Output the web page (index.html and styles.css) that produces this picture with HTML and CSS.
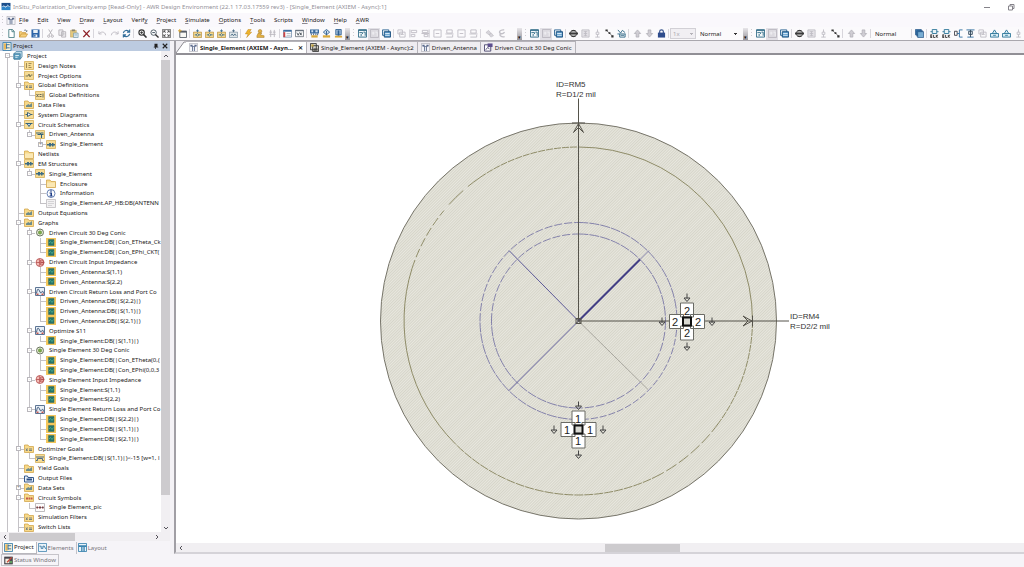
FILE: index.html
```html
<!DOCTYPE html>
<html lang="en">
<head>
<meta charset="utf-8">
<title>AWR Design Environment</title>
<link rel="stylesheet" href="styles.css">
</head>
<body>
<svg class="sprite" aria-hidden="true">
  <symbol id="logo" viewBox="0 0 20 20"><path fill="#1b4f8c" d="M0 2h20v8H0z"/><path fill="#2f86c9" d="M0 10h20v8H0z"/><path stroke="#e6f2fb" stroke-width="2" fill="none" d="M3 10c3-5 5 5 8 0s4-2 6 0"/></symbol>
  <symbol id="layout" viewBox="0 0 20 20"><path fill="#f4f4f8" stroke="#8a8a96" d="M1 1h18v18H1z"/><path fill="#5b6b8c" d="M3 4h5v4H3zM12 4h5v4h-5zM6 7h8v2H6zM7 9h2v9H7zM11 9h2v9h-2z"/></symbol>
  <symbol id="new" viewBox="0 0 20 20"><path fill="#fff" stroke="#4b7f86" stroke-width="2" d="M4 1h8l4 4v14H4z"/><path fill="none" stroke="#4b7f86" stroke-width="2" d="M11 1v5h5"/></symbol>
  <symbol id="open" viewBox="0 0 20 20"><path fill="#f5cf7c" stroke="#c58f30" stroke-width="1.5" d="M1 18V6h5l2 2h7v3M1 18l4-7h14l-4 7z"/><path fill="none" stroke="#456" stroke-width="1.5" d="M11 4c2-3 5-2 6 1m-2-1l2 2 1-3"/></symbol>
  <symbol id="save" viewBox="0 0 20 20"><path fill="#2b63a8" d="M1 1h18v18H1z"/><path fill="#e9f1f8" d="M5 2h10v7H5zM6 12h8v6H6z"/><path fill="#2b63a8" d="M7 13h3v4H7z"/></symbol>
  <symbol id="cut" viewBox="0 0 20 20"><path fill="none" stroke="#b3b0b6" stroke-width="2" d="M6 1l7 12M14 1L7 13"/><circle cx="6" cy="16" r="2.5" fill="none" stroke="#b3b0b6" stroke-width="2"/><circle cx="14" cy="16" r="2.5" fill="none" stroke="#b3b0b6" stroke-width="2"/></symbol>
  <symbol id="copy" viewBox="0 0 20 20"><path fill="#efedf0" stroke="#b5b2b8" stroke-width="2" d="M2 2h9v12H2zM8 6h9v12H8z"/><path stroke="#b5b2b8" d="M10 10h5M10 13h5"/></symbol>
  <symbol id="paste" viewBox="0 0 20 20"><path fill="#e3c77c" stroke="#b2934a" d="M1 3h13v15H1z"/><path fill="#8b8570" d="M4 1h7v4H4z"/><path fill="#e8f1f6" stroke="#6c93a8" stroke-width="1.5" d="M8 9h10v10H8z"/><path stroke="#6c93a8" d="M10 12h6M10 15h6"/></symbol>
  <symbol id="del" viewBox="0 0 20 20"><path stroke="#8c1d24" stroke-width="3" d="M3 3l14 15M17 3L3 18"/></symbol>
  <symbol id="undo" viewBox="0 0 20 20"><path fill="none" stroke="#bdbac2" stroke-width="2" d="M2 5v6h6M2 11c4-6 14-6 15 3"/></symbol>
  <symbol id="redo" viewBox="0 0 20 20"><path fill="none" stroke="#bdbac2" stroke-width="2" d="M18 5v6h-6M18 11C14 5 4 5 3 14"/></symbol>
  <symbol id="refresh" viewBox="0 0 20 20"><path fill="none" stroke="#346f9a" stroke-width="2.5" d="M3 9c1-6 9-8 13-3M17 1v6h-6M17 11c-1 6-9 8-13 3M3 19v-6h6"/></symbol>
  <symbol id="zin" viewBox="0 0 20 20"><circle cx="8" cy="8" r="6" fill="#eee" stroke="#333" stroke-width="2.5"/><path stroke="#333" stroke-width="2" d="M5 8h6M8 5v6"/><path stroke="#333" stroke-width="3.5" d="M12 12l7 7"/></symbol>
  <symbol id="zout" viewBox="0 0 20 20"><circle cx="8" cy="8" r="6" fill="#fff" stroke="#44515c" stroke-width="2"/><path stroke="#345" stroke-width="2" d="M5 8h6"/><path stroke="#333" stroke-width="3" d="M12 12l7 7"/></symbol>
  <symbol id="zfit" viewBox="0 0 20 20"><path fill="none" stroke="#444" stroke-width="1.5" d="M1 1h18v18H1z"/><path stroke="#444" stroke-width="2" fill="none" d="M4 8V4h4M12 4h4v4M16 12v4h-4M8 16H4v-4M4 4l4 4M16 4l-4 4M16 16l-4-4M4 16l4-4"/></symbol>
  <symbol id="newwin" viewBox="0 0 20 20"><path fill="#f8f8f4" stroke="#555c66" stroke-width="2" d="M4 5h15v14H4z"/><path fill="#555c66" d="M4 4h15v4H4z"/><path stroke="#d6a22a" stroke-width="2" d="M4 0v8M0 4h8"/></symbol>
  <symbol id="addbox" viewBox="0 0 20 20"><path fill="#f1d68e" stroke="#b88a2f" stroke-width="1.5" d="M1 7h18v12H1z"/><path stroke="#3b6e92" stroke-width="2" fill="none" d="M4 13h3l3-3 3 3-3 3-3-3M13 13h4M10 1v6M7 4h6"/></symbol>
  <symbol id="addbox2" viewBox="0 0 20 20"><path fill="#dfe6ea" stroke="#748a99" stroke-width="1.5" d="M1 7h18v12H1z"/><path stroke="#4a6b84" stroke-width="2" fill="none" d="M4 15l3-4 3 4 3-4 3 4M10 1v6M7 4h6"/></symbol>
  <symbol id="bolt" viewBox="0 0 20 20"><path fill="#efb52c" stroke="#b97f17" d="M9 1h7l-4 6h5L6 19l3-8H3z"/></symbol>
  <symbol id="person" viewBox="0 0 20 20"><circle cx="9" cy="5" r="4" fill="#e3b042" stroke="#9a7427"/><path fill="#e3b042" stroke="#9a7427" d="M5 9h8l-3 4 8 2v4H2v-4z"/></symbol>
  <symbol id="tune" viewBox="0 0 20 20"><path stroke="#bab7be" stroke-width="2" fill="none" d="M6 2v16M14 2v16M3 7h6M11 7h6M3 12h14"/></symbol>
  <symbol id="win" viewBox="0 0 20 20"><path fill="#fff" stroke="#58779a" stroke-width="1.5" d="M1 3h18v15H1z"/><path fill="#3d6d9f" d="M1 2h18v4H1z"/><path fill="#c44" d="M1 7h4v11H1z"/><path stroke="#b3bac4" stroke-width="2" d="M8 10h9M8 14h9"/></symbol>
  <symbol id="winx" viewBox="0 0 20 20"><path fill="#fff" stroke="#4d565f" stroke-width="1.5" d="M1 3h18v14H1z"/><path fill="#6a7480" d="M1 2h18v3H1z"/><path stroke="#4d565f" stroke-width="2" fill="none" d="M4 8l3 6 3-6M11 8l4 6M15 8l-4 6"/></symbol>
  <symbol id="chip" viewBox="0 0 20 20"><path fill="#3d6c9e" d="M0 1h20v9H0z"/><path fill="#cfe0ee" d="M3 3h4v4H3zM12 3h5v4h-5z"/><path stroke="#3d5b7c" stroke-width="2" fill="none" d="M3 10v4M8 10v4M13 10v4M17 10v4"/><path fill="#d9a83a" d="M3 14h14v5H3z"/></symbol>
  <symbol id="diamond" viewBox="0 0 20 20"><path fill="#cfe0ee" stroke="#2f5f91" stroke-width="2" d="M10 1l7 6-7 6-7-6z"/><path fill="#d9a83a" d="M2 14h16v5H2z"/><path fill="#2f5f91" d="M9 4h2v10H9z"/></symbol>
  <symbol id="meter" viewBox="0 0 20 20"><path fill="#a9c4de" stroke="#2f5f91" stroke-width="2" d="M4 1h12v12H4z"/><path fill="#2f5f91" d="M8 3h4v12H8z"/><path fill="#d9a83a" d="M2 15h16v4H2z"/></symbol>
  <symbol id="view" viewBox="0 0 20 20"><path fill="#f3f8fa" stroke="#2e6a86" stroke-width="2" d="M1 2h18v16H1z"/><path fill="#2e6a86" d="M1 1h18v3H1z"/><path fill="none" stroke="#2e6a86" stroke-width="2" d="M3 8h7v3M12 7h4v8M7 11v5"/></symbol>
  <symbol id="viewg" viewBox="0 0 20 20"><path fill="#dcdae0" stroke="#b9b7bf" stroke-width="2" d="M1 1h18v18H1z"/><path fill="none" stroke="#f2f1f4" stroke-width="2" d="M4 9h6M7 6v7M12 7h4v9"/></symbol>
  <symbol id="stack" viewBox="0 0 20 20"><path fill="#f2f7fb" stroke="#255f90" stroke-width="2" d="M1 2h14v12H1z"/><path fill="#5c9bcb" stroke="#174d7c" stroke-width="2" d="M5 6h14v12H5z"/><path stroke="#e3eff8" stroke-width="2" d="M7 10h10M7 14h10"/></symbol>
  <symbol id="g1" viewBox="0 0 20 20"><path fill="none" stroke="#bfbcc4" stroke-width="2" d="M2 2h10v9H2zM6 7h12v11H6zM9 12h6"/></symbol>
  <symbol id="g2" viewBox="0 0 20 20"><path fill="none" stroke="#bfbcc4" stroke-width="2" d="M2 1v18M5 3h12v5H5zM5 12h8v5H5z"/></symbol>
  <symbol id="g3" viewBox="0 0 20 20"><path fill="none" stroke="#bfbcc4" stroke-width="2" d="M18 1v18M3 3h12v5H3zM7 12h8v5H7zM1 10h17"/></symbol>
  <symbol id="g4" viewBox="0 0 20 20"><path fill="none" stroke="#bfbcc4" stroke-width="2" d="M2 2h16v16H2zM6 10h8"/></symbol>
  <symbol id="g5" viewBox="0 0 20 20"><path fill="none" stroke="#bfbcc4" stroke-width="2" d="M4 2h12v7H4zM1 11h18M3 18h14v-5"/></symbol>
  <symbol id="g6" viewBox="0 0 20 20"><path fill="#d6d4da" stroke="#b4b1b8" d="M2 8l6-5 5 6-4 4zM9 13l5-4 5 6-6 3z"/></symbol>
  <symbol id="g7" viewBox="0 0 20 20"><path fill="none" stroke="#c2c0c7" stroke-width="3" d="M16 2C6 1 3 8 8 10s8-2 9-3M8 10c-4 4 2 9 9 7"/></symbol>
  <symbol id="globe" viewBox="0 0 20 20"><circle cx="10" cy="10" r="7" fill="#ddd" stroke="#3b3b3b" stroke-width="2"/><path fill="#3b3b3b" d="M0 8h20v4H0zM6 2h8v3H6zM6 15h8v3H6z"/></symbol>
  <symbol id="gtab" viewBox="0 0 20 20"><path fill="#e7e5ea" stroke="#c0bdc5" stroke-width="2" d="M2 2h16v16H2zM6 6h8M6 10h8M6 14h8M10 5v11"/></symbol>
  <symbol id="gpin" viewBox="0 0 20 20"><path fill="none" stroke="#c0bdc5" stroke-width="2" d="M10 1v6M7 7h6v5H7zM10 12v6M5 18h10"/></symbol>
  <symbol id="path" viewBox="0 0 20 20"><path stroke="#555" stroke-width="1.5" d="M3 3l14 13"/><path fill="#333" d="M1 1h5v4H1zM8 7h4v4H8zM14 14h5v5h-5z"/></symbol>
  <symbol id="mesh" viewBox="0 0 20 20"><path fill="none" stroke="#2d6686" stroke-width="2" d="M2 2l6 7 4-6 6 5M1 11h18M6 11v7h12v-7M8 14h8"/></symbol>
  <symbol id="up" viewBox="0 0 20 20"><path fill="#cfcdd3" stroke="#aaa8b0" stroke-width="1.5" d="M10 2l7 8h-4v8H7v-8H3z"/></symbol>
  <symbol id="down" viewBox="0 0 20 20"><path fill="#cfcdd3" stroke="#aaa8b0" stroke-width="1.5" d="M10 18l7-8h-4V2H7v8H3z"/></symbol>
  <symbol id="lock" viewBox="0 0 20 20"><path fill="none" stroke="#35508c" stroke-width="2.5" d="M6 9V5c0-4 8-4 8 0v4"/><path fill="#2f4c8c" d="M2 8h16v11H2z"/></symbol>
  <symbol id="cube" viewBox="0 0 20 20"><path fill="#3b7bb2" stroke="#1f4f82" stroke-width="1.5" d="M1 1h13v12H1zM4 4h13v12H4z"/><path fill="#78add3" stroke="#1f4f82" stroke-width="1.5" d="M6 6h13v13H6z"/></symbol>
  <symbol id="elem" viewBox="0 0 20 20"><path fill="#e9f3f8" stroke="#2d7598" stroke-width="2" d="M5 1h10v9H5zM1 6h4M15 6h4"/><path fill="none" stroke="#333" stroke-width="2" d="M1 13h4M1 16h4M1 19h4M2 13v6M8 13v6h4M14 13v6M18 13l-4 3 4 3"/></symbol>
  <symbol id="port" viewBox="0 0 20 20"><path fill="#fff" stroke="#3b3b44" stroke-width="2" d="M1 5h6v9H1z"/><path stroke="#2d6ca0" stroke-width="2" fill="none" d="M7 10h5M19 2h-7v16h7"/></symbol>
  <symbol id="gnd" viewBox="0 0 20 20"><path stroke="#2d6ca0" stroke-width="2" d="M1 2h18M3 18h14"/><path fill="#e4eef4" stroke="#34495c" stroke-width="2" d="M6 5h8v7H6zM10 2v16"/></symbol>
  <symbol id="house" viewBox="0 0 20 20"><path fill="#d9edf5" stroke="#2b7599" stroke-width="2" d="M1 10h18v8H1zM5 10l5-8 5 8M7 14h6"/></symbol>
  <symbol id="panel" viewBox="0 0 20 20"><path fill="#f5efd9" stroke="#3a7fae" stroke-width="2" d="M1 1h18v18H1z"/><path fill="#e8b75a" d="M3 3h5v14H3z"/><path stroke="#2c6b9c" stroke-width="2" fill="none" d="M9 6h7M9 13h7M9 3v12"/></symbol>
  <symbol id="elems" viewBox="0 0 20 20"><path fill="#eaf3f9" stroke="#4f8db5" stroke-width="2" d="M1 1h18v18H1z"/><path fill="none" stroke="#3a78a3" stroke-width="2" d="M3 7h4v5h4V7h3l3 6"/></symbol>
  <symbol id="lay" viewBox="0 0 20 20"><path fill="#eaf3f9" stroke="#3c84b0" stroke-width="2" d="M1 1h18v18H1z"/><path fill="#3c84b0" d="M1 5h18v4H1zM7 9h3v10H7zM12 9h3v10h-3z"/></symbol>
  <symbol id="proj" viewBox="0 0 20 20"><path fill="#bcd9e8" stroke="#35749a" stroke-width="1.5" d="M6 1h13v12l-4 5H1V6z"/><path fill="#5fa0c0" stroke="#35749a" stroke-width="1.5" d="M1 6h14v12H1z"/><path stroke="#e3f2f8" stroke-width="2" d="M4 10h8M4 14h5"/></symbol>
  <symbol id="note" viewBox="0 0 20 18"><path fill="#f6dc95" stroke="#d3ab52" stroke-width="1.5" d="M1 1h18v16H1z"/><path fill="none" stroke="#a08a54" stroke-width="2" d="M5 4v10M9 5h6M9 9h4M9 13h6"/></symbol>
  <symbol id="opt" viewBox="0 0 20 18"><path fill="#f6dc95" stroke="#d3ab52" stroke-width="1.5" d="M1 1h18v16H1z"/><path fill="none" stroke="#7d7a58" stroke-width="2" d="M3 10h5l2-4 2 6 2-4h3"/></symbol>
  <symbol id="var" viewBox="0 0 20 18"><path fill="#f6dc95" stroke="#d3ab52" stroke-width="1.5" d="M1 1h18v16H1z"/><path fill="none" stroke="#6b6c58" stroke-width="2" d="M3 6l4 6M7 6l-4 6M9 7h4M9 11h4M16 5v8"/></symbol>
  <symbol id="fold" viewBox="0 0 20 18"><path fill="#f7d98a" stroke="#d0a347" stroke-width="1.5" d="M1 17V2h7l2 3h9v12z"/><path fill="#fbe8b4" d="M2 7h16v9H2z"/></symbol>
  <symbol id="fx" viewBox="0 0 20 18"><path fill="#f7d98a" stroke="#d0a347" stroke-width="1.5" d="M1 17V2h7l2 3h9v12z"/><path fill="none" stroke="#77807e" stroke-width="2" d="M4 9l3 5M7 9l-3 5M10 10h6M10 13h6"/></symbol>
  <symbol id="data" viewBox="0 0 20 18"><path fill="#f7d98a" stroke="#d0a347" stroke-width="1.5" d="M1 17V2h7l2 3h9v12z"/><path fill="#6e8c8c" d="M4 14V11l5-3 2 2 5-4v8z"/></symbol>
  <symbol id="sys" viewBox="0 0 20 18"><path fill="#f6dc95" stroke="#d3ab52" stroke-width="1.5" d="M1 1h18v16H1z"/><path fill="#fff" stroke="#3f6579" stroke-width="2" d="M7 5l7 4-7 4zM3 9h4M14 9h3"/></symbol>
  <symbol id="sch" viewBox="0 0 20 18"><path fill="#f6dc95" stroke="#d3ab52" stroke-width="1.5" d="M1 1h18v16H1z"/><path fill="#dfeef5" stroke="#33627d" stroke-width="2" d="M3 7h14M6 7l4 6 4-6"/></symbol>
  <symbol id="ant" viewBox="0 0 20 18"><path fill="#f6dc95" stroke="#d3ab52" stroke-width="1.5" d="M1 1h18v16H1z"/><path fill="none" stroke="#33627d" stroke-width="2" d="M2 6h9v3H5M11 9h6M12 6h5M13 9v7"/></symbol>
  <symbol id="em" viewBox="0 0 20 18"><path fill="#f6dc95" stroke="#d3ab52" stroke-width="1.5" d="M1 1h18v16H1z"/><path fill="#3d6c84" d="M2 8h16v3H2zM6 6h4v7H6zM12 6h3v7h-3z"/></symbol>
  <symbol id="info" viewBox="0 0 20 18"><circle cx="10" cy="9" r="8" fill="#fff" stroke="#33569a" stroke-width="1.5"/><path fill="#1d3c87" d="M8 3h4v2H8zM7 7h5v6h1v2H7v-2h2V9H7z"/></symbol>
  <symbol id="page" viewBox="0 0 20 18"><path fill="#f2f1f2" stroke="#bab8bb" stroke-width="1.5" d="M1 1h18v16H1z"/><path stroke="#cac8cb" stroke-width="1.5" d="M4 5h12M4 9h12M4 13h8"/></symbol>
  <symbol id="con" viewBox="0 0 20 18"><circle cx="10" cy="9" r="7" fill="#eef2df" stroke="#6a7560" stroke-width="2"/><circle cx="10" cy="9" r="3.500" fill="#7eb04a" stroke="#5c7d3f"/></symbol>
  <symbol id="smith" viewBox="0 0 20 18"><circle cx="10" cy="9" r="8" fill="#f4bdb7" stroke="#b24b4b" stroke-width="1.5"/><circle cx="13" cy="9" r="4.5" fill="none" stroke="#b24b4b" stroke-width="1.5"/><path stroke="#b24b4b" stroke-width="1.5" fill="none" d="M2 9h16M8 1c0 5 4 8 10 8M8 17c0-5 4-8 10-8"/></symbol>
  <symbol id="rect" viewBox="0 0 20 18"><path fill="#e8f0f7" stroke="#5d7594" stroke-width="2" d="M1 1h18v16H1z"/><path fill="none" stroke="#40597b" stroke-width="2" d="M3 13c2-12 4-10 7-3s5-9 7 3"/><path fill="#c7564e" d="M3 13h4v3H3zM13 13h4v3h-4z"/></symbol>
  <symbol id="meas" viewBox="0 0 20 18"><path fill="#f3c75c" d="M0 0h20v18H0z"/><path fill="#24756a" stroke="#3f6a5e" d="M5 3h11v12H5z"/><path fill="none" stroke="#58b794" stroke-width="1.5" d="M6 10l3-3 3 4 3-4"/></symbol>
  <symbol id="goal" viewBox="0 0 20 18"><path fill="#f6dc95" stroke="#d3ab52" stroke-width="1.5" d="M1 1h18v16H1z"/><path fill="none" stroke="#4b6b8a" stroke-width="2" d="M2 6h16M2 13h3V9h10v4h3"/></symbol>
  <symbol id="outf" viewBox="0 0 20 18"><path fill="#e9f1f8" stroke="#36598c" stroke-width="2" d="M1 4h6l1 3h11v9H1z"/><path fill="#2d4f86" d="M5 9h11v4H5z"/></symbol>
  <symbol id="sym" viewBox="0 0 20 18"><path fill="#f7d98a" stroke="#d0a347" stroke-width="1.5" d="M1 17V2h7l2 3h9v12z"/><path fill="#c25b4a" d="M4 9h4v4H4zM9 9h3v4H9zM13 9h4v4h-4z"/></symbol>
  <symbol id="pic" viewBox="0 0 20 18"><path fill="#fdfdfd" stroke="#a9a7ab" stroke-width="1.5" d="M1 1h18v16H1z"/><path fill="#9c3f46" d="M3 7h3v4H3zM8 7h4v4H8zM14 7h3v4h-3z"/><path stroke="#444" d="M2 9h16"/></symbol>
  <symbol id="graph" viewBox="0 0 20 20"><path fill="#fff" stroke="#44406a" stroke-width="2" d="M1 4h14v14H1z"/><path fill="#5d4f8e" d="M8 1h11v8H8z"/><path fill="none" stroke="#44406a" stroke-width="2" d="M4 15l4-5 4 3"/></symbol>
  <symbol id="threed" viewBox="0 0 20 20"><path fill="#d7d4c9" stroke="#3a3a3a" stroke-width="2" d="M1 1h13v14H1zM6 6h13v13H6z"/><path fill="#4a4a4a" d="M8 12h9v5H8z"/><path fill="#c2a23e" d="M3 3h5v5H3z"/></symbol>
  <symbol id="status" viewBox="0 0 20 20"><path fill="#4b4852" stroke="#333" d="M1 2h18v16H1z"/><path fill="#f3efe2" d="M3 6h9v10H3z"/><path stroke="#c84b3c" stroke-width="3" d="M7 14L17 3"/><path fill="#60a060" d="M13 11h5v5h-5z"/></symbol>
</svg>

<div class="app">
  <header class="titlebar">
    <svg class="ic" aria-hidden="true"><use href="#logo"/></svg>
    <h1>InSitu_Polarization_Diversity.emp [Read-Only] - AWR Design Environment (22.1 17.03.17559 rev3) - [Single_Element (AXIEM - Async):1]</h1>
    <button class="wbtn" aria-label="Minimize"><svg viewBox="0 0 8 8"><path d="M1 4.500h6"/></svg></button>
    <button class="wbtn" aria-label="Restore"><svg viewBox="0 0 8 8"><path d="M1.500 3h4v4h-4zM3 3V1.500h4v4H5.500"/></svg></button>
  </header>

  <nav class="menubar" aria-label="Main menu">
    <i class="grip"></i><svg class="ic" aria-hidden="true"><use href="#layout"/></svg>
    <button><u>F</u>ile</button><button><u>E</u>dit</button><button><u>V</u>iew</button><button><u>D</u>raw</button><button><u>L</u>ayout</button><button>Verif<u>y</u></button><button><u>P</u>roject</button><button><u>S</u>imulate</button><button><u>O</u>ptions</button><button><u>T</u>ools</button><button>Scripts</button><button><u>W</u>indow</button><button><u>H</u>elp</button><button><u>A</u>WR</button>
  </nav>

  <div class="toolbars">
    <div class="bar" role="toolbar" aria-label="Standard">
      <i class="grip"></i>
      <button aria-label="New"><svg><use href="#new"/></svg></button><button aria-label="Open"><svg><use href="#open"/></svg></button><button aria-label="Save"><svg><use href="#save"/></svg></button><i class="sep"></i>
      <button aria-label="Cut"><svg><use href="#cut"/></svg></button><button aria-label="Copy"><svg><use href="#copy"/></svg></button><button aria-label="Paste"><svg><use href="#paste"/></svg></button><button aria-label="Delete"><svg><use href="#del"/></svg></button><i class="sep wide"></i>
      <button aria-label="Undo"><svg><use href="#undo"/></svg></button><button aria-label="Redo"><svg><use href="#redo"/></svg></button><button aria-label="Refresh"><svg><use href="#refresh"/></svg></button><i class="sep wide"></i>
      <button aria-label="Zoom in"><svg><use href="#zin"/></svg></button><button aria-label="Zoom out"><svg><use href="#zout"/></svg></button><button aria-label="View all"><svg><use href="#zfit"/></svg></button><i class="sep wide"></i>
      <button aria-label="New window"><svg><use href="#newwin"/></svg></button><i class="sep"></i>
      <button aria-label="Add system diagram"><svg><use href="#addbox"/></svg></button><button aria-label="Add schematic"><svg><use href="#addbox"/></svg></button><button aria-label="Add EM structure"><svg><use href="#addbox"/></svg></button><button aria-label="Add graph"><svg><use href="#addbox2"/></svg></button><i class="sep"></i>
      <button aria-label="Analyze"><svg><use href="#bolt"/></svg></button><button aria-label="Optimize"><svg><use href="#person"/></svg></button><button aria-label="Tune"><svg><use href="#tune"/></svg></button><i class="sep"></i>
      <button aria-label="Status"><svg><use href="#win"/></svg></button><button aria-label="Variables"><svg><use href="#winx"/></svg></button><i class="sep"></i>
      <button aria-label="Element"><svg><use href="#chip"/></svg></button><button aria-label="Port"><svg><use href="#diamond"/></svg></button><button aria-label="Meter"><svg><use href="#meter"/></svg></button>
      <button class="more" aria-label="More standard tools">▾</button>
    </div>
    <div class="bar" role="toolbar" aria-label="Align">
      <i class="grip"></i>
      <button aria-label="Schematic view"><svg><use href="#view"/></svg></button><button class="held" aria-label="Layout view"><svg><use href="#viewg"/></svg></button><button aria-label="3D view"><svg><use href="#stack"/></svg></button><i class="sep"></i>
      <button aria-label="Snap"><svg><use href="#g1"/></svg></button><button aria-label="Align left"><svg><use href="#g2"/></svg></button><button aria-label="Align right"><svg><use href="#g3"/></svg></button><button aria-label="Center"><svg><use href="#g4"/></svg></button><button aria-label="Align top"><svg><use href="#g5"/></svg></button><button aria-label="Align middle"><svg><use href="#g4"/></svg></button><button aria-label="Align bottom"><svg><use href="#g5"/></svg></button><i class="sep wide"></i>
      <button aria-label="Union"><svg><use href="#g6"/></svg></button><button aria-label="Subtract"><svg><use href="#g7"/></svg></button><i class="fill"></i>
      <button class="more" aria-label="More align tools">▾</button>
    </div>
    <div class="bar" role="toolbar" aria-label="EM layout">
      <i class="grip"></i>
      <button aria-label="Schematic view"><svg><use href="#view"/></svg></button><button class="held" aria-label="Layout view"><svg><use href="#viewg"/></svg></button><button aria-label="3D view"><svg><use href="#stack"/></svg></button><i class="sep"></i>
      <button aria-label="Drill hole"><svg><use href="#globe"/></svg></button><button aria-label="Table"><svg><use href="#gtab"/></svg></button><button aria-label="Pin"><svg><use href="#gpin"/></svg></button><button aria-label="Measure"><svg><use href="#path"/></svg></button><button aria-label="Mesh"><svg><use href="#mesh"/></svg></button><i class="sep wide"></i>
      <button aria-label="Layer up"><svg><use href="#up"/></svg></button><button aria-label="Layer down"><svg><use href="#down"/></svg></button><button aria-label="Lock"><svg><use href="#lock"/></svg></button><i class="sep"></i>
      <select class="scale" aria-label="Grid multiplier" disabled><option>1x</option></select><select aria-label="Line style"><option>Normal</option></select>
      <button class="more" aria-label="More layout tools">▾</button>
    </div>
    <div class="bar last" role="toolbar" aria-label="Elements">
      <i class="grip"></i>
      <button aria-label="Schematic view"><svg><use href="#view"/></svg></button><button class="held" aria-label="Layout view"><svg><use href="#viewg"/></svg></button><button aria-label="3D view"><svg><use href="#stack"/></svg></button><i class="sep"></i>
      <button aria-label="Drill hole"><svg><use href="#globe"/></svg></button><button aria-label="Table"><svg><use href="#gtab"/></svg></button><button aria-label="Pin"><svg><use href="#gpin"/></svg></button><button aria-label="Measure"><svg><use href="#path"/></svg></button><i class="sep wide"></i>
      <button aria-label="Layer up"><svg><use href="#up"/></svg></button><button aria-label="Layer down"><svg><use href="#down"/></svg></button><i class="sep"></i>
      <select aria-label="Shape style"><option>Normal</option></select><i class="sep"></i>
      <button aria-label="3D layers"><svg><use href="#cube"/></svg></button><i class="sep"></i>
      <button aria-label="Element"><svg><use href="#elem"/></svg></button><button aria-label="Subcircuit"><svg><use href="#elem"/></svg></button><button aria-label="Port"><svg><use href="#port"/></svg></button><button aria-label="Ground"><svg><use href="#gnd"/></svg></button><button aria-label="Copy shape"><svg><use href="#g1"/></svg></button><button aria-label="Edge port"><svg><use href="#house"/></svg></button><button aria-label="Internal port"><svg><use href="#house"/></svg></button><button aria-label="Extraction"><svg><use href="#gpin"/></svg></button>
    </div>
  </div>

  <div class="main">
    <aside class="side">
      <div class="panel-head">
        <svg class="ic" aria-hidden="true"><use href="#panel"/></svg><h2>Project</h2>
        <button aria-label="Pin panel"><svg viewBox="0 0 8 8"><path fill="#222" d="M2 1h4v4h1v1H1V5h1zM3 6h1v2H3z"/></svg></button>
        <button aria-label="Close panel"><svg viewBox="0 0 8 8"><path stroke="#222" stroke-width="1.500" d="M1 1l6 6M7 1L1 7"/></svg></button>
      </div>
      <div class="treebox">
        <ul class="tree">
          <li><i class="r"><button aria-label="Collapse">−</button></i><svg><use href="#proj"/></svg>Project</li>
          <li><i class="v"></i><i class="t"></i><svg><use href="#note"/></svg>Design Notes</li>
          <li><i class="v"></i><i class="t"></i><svg><use href="#opt"/></svg>Project Options</li>
          <li><i class="v"></i><i class="t"><button aria-label="Collapse">−</button></i><svg><use href="#fx"/></svg>Global Definitions</li>
          <li><i class="v"></i><i class="v"></i><i class="e"></i><svg><use href="#var"/></svg>Global Definitions</li>
          <li><i class="v"></i><i class="t"></i><svg><use href="#data"/></svg>Data Files</li>
          <li><i class="v"></i><i class="t"></i><svg><use href="#sys"/></svg>System Diagrams</li>
          <li><i class="v"></i><i class="t"><button aria-label="Collapse">−</button></i><svg><use href="#sch"/></svg>Circuit Schematics</li>
          <li><i class="v"></i><i class="v"></i><i class="e"><button aria-label="Collapse">−</button></i><svg><use href="#ant"/></svg>Driven_Antenna</li>
          <li><i class="v"></i><i class="v"></i><i></i><i class="e"><button aria-label="Expand">+</button></i><svg><use href="#em"/></svg>Single_Element</li>
          <li><i class="v"></i><i class="t"></i><svg><use href="#fold"/></svg>Netlists</li>
          <li><i class="v"></i><i class="t"><button aria-label="Collapse">−</button></i><svg><use href="#em"/></svg>EM Structures</li>
          <li><i class="v"></i><i class="v"></i><i class="e"><button aria-label="Collapse">−</button></i><svg><use href="#em"/></svg>Single_Element</li>
          <li><i class="v"></i><i class="v"></i><i></i><i class="t"></i><svg><use href="#fold"/></svg>Enclosure</li>
          <li><i class="v"></i><i class="v"></i><i></i><i class="t"></i><svg><use href="#info"/></svg>Information</li>
          <li><i class="v"></i><i class="v"></i><i></i><i class="e"></i><svg><use href="#page"/></svg>Single_Element.AP_HB:DB(ANTENN</li>
          <li><i class="v"></i><i class="t"></i><svg><use href="#data"/></svg>Output Equations</li>
          <li><i class="v"></i><i class="t"><button aria-label="Collapse">−</button></i><svg><use href="#data"/></svg>Graphs</li>
          <li><i class="v"></i><i class="v"></i><i class="t"><button aria-label="Collapse">−</button></i><svg><use href="#con"/></svg>Driven Circuit 30 Deg Conic</li>
          <li><i class="v"></i><i class="v"></i><i class="v"></i><i class="t"></i><svg><use href="#meas"/></svg>Single_Element:DB(|Con_ETheta_Ck</li>
          <li><i class="v"></i><i class="v"></i><i class="v"></i><i class="e"></i><svg><use href="#meas"/></svg>Single_Element:DB(|Con_EPhi_CKT(</li>
          <li><i class="v"></i><i class="v"></i><i class="t"><button aria-label="Collapse">−</button></i><svg><use href="#smith"/></svg>Driven Circuit Input Impedance</li>
          <li><i class="v"></i><i class="v"></i><i class="v"></i><i class="t"></i><svg><use href="#meas"/></svg>Driven_Antenna:S(1,1)</li>
          <li><i class="v"></i><i class="v"></i><i class="v"></i><i class="e"></i><svg><use href="#meas"/></svg>Driven_Antenna:S(2,2)</li>
          <li><i class="v"></i><i class="v"></i><i class="t"><button aria-label="Collapse">−</button></i><svg><use href="#rect"/></svg>Driven Circuit Return Loss and Port Co</li>
          <li><i class="v"></i><i class="v"></i><i class="v"></i><i class="t"></i><svg><use href="#meas"/></svg>Driven_Antenna:DB(|S(2,2)|)</li>
          <li><i class="v"></i><i class="v"></i><i class="v"></i><i class="t"></i><svg><use href="#meas"/></svg>Driven_Antenna:DB(|S(1,1)|)</li>
          <li><i class="v"></i><i class="v"></i><i class="v"></i><i class="e"></i><svg><use href="#meas"/></svg>Driven_Antenna:DB(|S(2,1)|)</li>
          <li><i class="v"></i><i class="v"></i><i class="t"><button aria-label="Collapse">−</button></i><svg><use href="#rect"/></svg>Optimize S11</li>
          <li><i class="v"></i><i class="v"></i><i class="v"></i><i class="e"></i><svg><use href="#meas"/></svg>Single_Element:DB(|S(1,1)|)</li>
          <li><i class="v"></i><i class="v"></i><i class="t"><button aria-label="Collapse">−</button></i><svg><use href="#con"/></svg>Single Element 30 Deg Conic</li>
          <li><i class="v"></i><i class="v"></i><i class="v"></i><i class="t"></i><svg><use href="#meas"/></svg>Single_Element:DB(|Con_ETheta(0,(</li>
          <li><i class="v"></i><i class="v"></i><i class="v"></i><i class="e"></i><svg><use href="#meas"/></svg>Single_Element:DB(|Con_EPhi(0,0,3</li>
          <li><i class="v"></i><i class="v"></i><i class="t"><button aria-label="Collapse">−</button></i><svg><use href="#smith"/></svg>Single Element Input Impedance</li>
          <li><i class="v"></i><i class="v"></i><i class="v"></i><i class="t"></i><svg><use href="#meas"/></svg>Single_Element:S(1,1)</li>
          <li><i class="v"></i><i class="v"></i><i class="v"></i><i class="e"></i><svg><use href="#meas"/></svg>Single_Element:S(2,2)</li>
          <li><i class="v"></i><i class="v"></i><i class="e"><button aria-label="Collapse">−</button></i><svg><use href="#rect"/></svg>Single Element Return Loss and Port Co</li>
          <li><i class="v"></i><i class="v"></i><i></i><i class="t"></i><svg><use href="#meas"/></svg>Single_Element:DB(|S(2,2)|)</li>
          <li><i class="v"></i><i class="v"></i><i></i><i class="t"></i><svg><use href="#meas"/></svg>Single_Element:DB(|S(1,1)|)</li>
          <li><i class="v"></i><i class="v"></i><i></i><i class="e"></i><svg><use href="#meas"/></svg>Single_Element:DB(|S(2,1)|)</li>
          <li><i class="v"></i><i class="t"><button aria-label="Collapse">−</button></i><svg><use href="#fx"/></svg>Optimizer Goals</li>
          <li><i class="v"></i><i class="v"></i><i class="e"></i><svg><use href="#goal"/></svg>Single_Element:DB(|S(1,1)|)&lt;-15 [w=1, l</li>
          <li><i class="v"></i><i class="t"></i><svg><use href="#data"/></svg>Yield Goals</li>
          <li><i class="v"></i><i class="t"></i><svg><use href="#outf"/></svg>Output Files</li>
          <li><i class="v"></i><i class="t"><button aria-label="Expand">+</button></i><svg><use href="#data"/></svg>Data Sets</li>
          <li><i class="v"></i><i class="t"><button aria-label="Collapse">−</button></i><svg><use href="#sym"/></svg>Circuit Symbols</li>
          <li><i class="v"></i><i class="v"></i><i class="e"></i><svg><use href="#pic"/></svg>Single Element_pic</li>
          <li><i class="v"></i><i class="t"></i><svg><use href="#fx"/></svg>Simulation Filters</li>
          <li><i class="v"></i><i class="t"></i><svg><use href="#fx"/></svg>Switch Lists</li>
        </ul>
        <div class="vscroll">
          <button aria-label="Scroll up"><svg viewBox="0 0 8 8"><path d="M2 5l2-2 2 2"/></svg></button>
          <span class="track"><span class="thumb"></span></span>
          <button aria-label="Scroll down"><svg viewBox="0 0 8 8"><path d="M2 3l2 2 2-2"/></svg></button>
        </div>
      </div>
      <div class="hscroll">
        <button aria-label="Scroll left"><svg viewBox="0 0 8 8"><path d="M5 2L3 4l2 2"/></svg></button>
        <span class="track"><span class="thumb"></span></span>
        <button aria-label="Scroll right"><svg viewBox="0 0 8 8"><path d="M3 2l2 2-2 2"/></svg></button>
      </div>
      <div class="sidetabs" role="tablist">
        <button class="on" role="tab" aria-selected="true"><svg><use href="#panel"/></svg>Project</button>
        <button role="tab" aria-selected="false"><svg><use href="#elems"/></svg>Elements</button>
        <button role="tab" aria-selected="false"><svg><use href="#lay"/></svg>Layout</button>
      </div>
    </aside>

    <section class="docs">
      <div class="doctabs" role="tablist">
        <svg class="slant" viewBox="0 0 10 12" aria-hidden="true"><path fill="#fff" stroke="#8c8a90" d="M0 12L8 1h3v11"/></svg>
        <button class="on" role="tab" aria-selected="true"><svg><use href="#layout"/></svg>Single_Element (AXIEM - Asyn...<span class="x">✕</span></button>
        <button role="tab" aria-selected="false"><svg><use href="#threed"/></svg>Single_Element (AXIEM - Async):2</button>
        <button role="tab" aria-selected="false"><svg><use href="#layout"/></svg>Driven_Antenna</button>
        <button role="tab" aria-selected="false"><svg><use href="#graph"/></svg>Driven Circuit 30 Deg Conic</button>
      </div>
      <div class="canvas">
        <svg class="drawing" viewBox="176 55 848 487" role="img" aria-label="Antenna layout">
          <defs>
            <pattern id="hatch" width="2" height="2" patternUnits="userSpaceOnUse" patternTransform="rotate(45)"><path fill="#e8e7df" d="M0 0h2v2H0z"/><path fill="#d6d5c9" d="M0 0h1v2H0z"/></pattern>
            <g id="flag"><path d="M0-4V1M-3 0.500H3L0 4z" fill="none" stroke="#444"/></g>
            <g id="pads" fill="#fff" stroke="#6a6a64">
              <path d="M-6.500-18.500h13v14h-13zM-6.500 4.500h13v14h-13zM-17.500-7h14v14h-14zM3.500-7h14v14h-14z"/>
              <path fill="#d9d9d2" stroke="#111" stroke-width="2" d="M-4-4h8v8h-8z"/>
            </g>
          </defs>
          <circle cx="578.5" cy="320.5" r="198" fill="url(#hatch)" stroke="#77756a"/>
          <g class="ring">
            <path d="M752.500 320.500A174 174 0 0 1 719 422" stroke-dasharray="7 1"/>
            <path d="M719 422A174 174 0 0 1 660 474" stroke-dasharray="12 3"/>
            <path d="M660 474A174 174 0 0 1 578.500 494.500A174 174 0 0 1 455 443" stroke-dasharray="9 1"/>
            <path d="M455 443A174 174 0 0 1 412 268"/>
            <path d="M412 268A174 174 0 0 1 444 210" stroke-dasharray="9 3"/>
            <path d="M449 204A174 174 0 0 1 480 177" stroke-dasharray="20 6"/>
            <path d="M480 177A174 174 0 0 1 578.500 146.500" stroke-dasharray="7 1"/>
            <path d="M578.500 146.500A174 174 0 0 1 752.500 320.500"/>
          </g>
          <g class="inner">
            <path d="M677 320.500A98.500 98.500 0 0 1 578.500 419" stroke-dasharray="7 2"/>
            <path d="M578.500 419A98.500 98.500 0 0 1 480 320.500" stroke-dasharray="10 1"/>
            <path d="M480 320.500A98.500 98.500 0 0 1 578.500 222" stroke-dasharray="8 2"/>
            <path d="M578.500 222A98.500 98.500 0 0 1 677 320.500" stroke-dasharray="10 1"/>
            <path d="M665.500 320.500A87 87 0 0 1 578.500 407.500" stroke-dasharray="9 2"/>
            <path d="M578.500 407.500A87 87 0 0 1 491.500 320.500" stroke-dasharray="10 1"/>
            <path d="M491.500 320.500A87 87 0 0 1 578.500 233.500" stroke-dasharray="8 2"/>
            <path d="M578.500 233.500A87 87 0 0 1 665.500 320.500" stroke-dasharray="10 1"/>
            <path class="arm" d="M509 250L578.500 320.500L509 390"/>
            <path d="M640 259L649 250"/>
            <path class="bold" d="M578.500 320.500L640 259"/>
            <path class="pale" d="M578.500 320.500L648 389"/>
          </g>
          <g class="dim">
            <path d="M578.500 98V320.500H789M572 122.500H585M752.500 315V326"/>
            <path d="M573.500 132L578.500 123L583.500 132L578.500 127zM743 315.500L752 320.500L743 325.500L748 320.500z"/>
            <path d="M576 318h5v5h-5zM576 318l5 5M581 318l-5 5"/>
          </g>
          <use href="#pads" x="687" y="321"/><use href="#pads" x="578.5" y="429"/>
          <use href="#flag" x="687" y="297"/><use href="#flag" x="662" y="321"/><use href="#flag" x="712" y="321"/><use href="#flag" x="687" y="346"/>
          <use href="#flag" x="578.5" y="405"/><use href="#flag" x="554" y="429"/><use href="#flag" x="603" y="429"/><use href="#flag" x="578.5" y="454"/>
          <g class="num">
            <text x="687" y="314">2</text><text x="675" y="325">2</text><text x="698" y="325">2</text><text x="687" y="336">2</text>
            <text x="578" y="422">1</text><text x="567" y="433">1</text><text x="590" y="433">1</text><text x="578" y="444">1</text>
          </g>
          <g class="lbl">
            <text x="556" y="86">ID=RM5</text><text x="556" y="96">R=D1/2 mil</text>
            <text x="790" y="318">ID=RM4</text><text x="790" y="328">R=D2/2 mil</text>
          </g>
        </svg>
      </div>
      <div class="hscroll wide">
        <button aria-label="Scroll left"><svg viewBox="0 0 8 8"><path d="M5 2L3 4l2 2"/></svg></button>
        <span class="track"><span class="thumb"></span></span>
      </div>
    </section>
  </div>

  <footer class="status"><button><svg><use href="#status"/></svg>Status Window</button></footer>
</div>
</body>
</html>
```
FILE: styles.css
```css
* { box-sizing: border-box; }
html, body { height: 100%; margin: 0; }
body { font: 6px/10px "Noto Sans", "Open Sans", sans-serif; color: #1c1a20; background: #f4f2f6; overflow: hidden; }
h1, h2 { margin: 0; font: inherit; }
button, select { font: inherit; color: inherit; border: 0; padding: 0; margin: 0; background: none; border-radius: 0; }
button { display: flex; align-items: center; justify-content: center; }
.sprite { display: none; }
.ic { width: 10px; height: 9px; flex: none; }
.app { display: flex; flex-direction: column; height: 100%; }

.titlebar { display: flex; align-items: center; height: 13px; padding: 0 9px 0 1px; background: #fff; color: #95929a; }
.titlebar h1 { flex: 1; margin-left: 2px; white-space: nowrap; }
.wbtn { width: 8px; margin-left: 16px; }
.wbtn svg { width: 8px; height: 8px; fill: none; stroke: #85838a; }

.menubar { display: flex; align-items: center; height: 14px; padding-left: 1px; gap: 9px; background: #faf8fc; }
.menubar .ic { margin: 0 -6px 0 -8px; }
.menubar u { text-underline-offset: 1px; text-decoration-thickness: 1px; text-decoration-color: #8b8890; }

.toolbars { display: flex; height: 14px; background: #f2f0f4; border-bottom: 1px solid #a9a7ad; }
.bar { display: flex; align-items: center; flex: none; padding-left: 1px; background: #fbfafc; }
.bar button { width: 12px; height: 12px; flex: none; }
.bar .held { background: #e2e0e6; }
.bar svg { width: 9px; height: 9px; }
.bar .fill { width: 9px; }
.bar .more { width: 5px; height: 12px; margin: 0 1px; align-items: flex-end; background: linear-gradient(#e8e6ea, #98969c); font-size: 5px; line-height: 6px; color: #111; }
.bar.last { flex: 1; min-width: 0; overflow: hidden; }
.bar select { appearance: none; width: 44px; height: 11px; margin-right: 1px; padding: 0 0 0 3px; background: conic-gradient(from -45deg at 50% 100%, #333 90deg, transparent 0) 38px 5px / 4px 2px no-repeat; background: linear-gradient(#333, #333) 37px 5px / 3px 1px no-repeat, linear-gradient(#333, #333) 38px 6px / 1px 1px no-repeat; }
.bar .scale { width: 26px; padding-left: 2px; border: 1px solid #d2d0d6; background: linear-gradient(#b5b3b9, #b5b3b9) 19px 4px / 3px 1px no-repeat, linear-gradient(#b5b3b9, #b5b3b9) 20px 5px / 1px 1px no-repeat, #f1eff3; color: #aaa8ae; opacity: 1; }
.grip { width: 4px; height: 9px; flex: none; background: repeating-linear-gradient(#cfcdd3 0 1px, transparent 1px 3px) 1px 0 / 1px 9px no-repeat; }
.sep { width: 3px; height: 9px; flex: none; background: linear-gradient(#d8d6dc, #d8d6dc) 1px 0 / 1px 100% no-repeat; }
.sep.wide { width: 4px; }

.main { display: flex; flex: 1; min-height: 0; }
.side { display: flex; flex-direction: column; flex: 0 0 170px; margin-right: 4px; }
.panel-head { display: flex; align-items: center; height: 10px; padding: 0 1px 0 2px; background: #bccbe0; }
.panel-head h2 { flex: 1; margin-left: 1px; }
.panel-head button { width: 9px; }
.panel-head svg:not(.ic) { width: 6px; height: 6px; }
.treebox { display: flex; flex: 1; min-height: 0; background: #fff; }
.tree { flex: 1; min-width: 0; display: grid; grid-auto-rows: 1fr; margin: 0; padding: 0 0 0 2px; list-style: none; overflow: hidden; }
.tree li { display: flex; align-items: center; min-height: 0; white-space: nowrap; }
.tree li > svg { width: 10px; height: 9px; flex: none; margin-right: 4px; }
.tree i { --line: linear-gradient(#c4c2c6, #c4c2c6); align-self: stretch; display: flex; align-items: center; justify-content: center; width: 11px; flex: none; background-repeat: no-repeat; }
.tree .v { background-image: var(--line); background-position: 5px 0; background-size: 1px 100%; }
.tree .t { background-image: var(--line), var(--line); background-position: 5px 0, 5px 5px; background-size: 1px 100%, 6px 1px; }
.tree .e { background-image: var(--line), var(--line); background-position: 5px 0, 5px 5px; background-size: 1px 5px, 6px 1px; }
.tree .r { background-image: var(--line), var(--line); background-position: 5px 5px, 5px 5px; background-size: 1px 5px, 6px 1px; }
.tree button { width: 5px; height: 5px; border: 1px solid #b9b7bc; background: #fff; color: #777; font-size: 5px; line-height: 3px; }

.vscroll { display: flex; flex-direction: column; width: 9px; background: #f1eff2; }
.vscroll button, .hscroll button { width: 9px; height: 9px; flex: none; }
.vscroll button svg, .hscroll button svg { width: 8px; height: 8px; fill: none; stroke: #55535a; }
.track { flex: 1; display: flex; }
.vscroll .thumb { width: 100%; height: 94%; background: #cdcbce; }
.hscroll { display: flex; align-items: center; height: 9px; background: #f1eff2; }
.hscroll .track { height: 8px; }
.side .hscroll { padding-right: 9px; }
.side .hscroll .thumb { width: 46%; background: #cdcbce; }

.sidetabs { display: flex; align-items: center; height: 13px; padding-left: 2px; color: #77757c; }
.sidetabs button { height: 12px; padding: 0 2px 0 1px; gap: 1px; border-right: 1px solid #c4c2c8; }
.sidetabs button:last-child { border: 0; }
.sidetabs svg { width: 9px; height: 9px; }
.sidetabs .on { background: #fff; color: #1c1a20; border: 1px solid #b9b7bd; border-top: 0; }

.docs { display: flex; flex-direction: column; flex: 1; min-width: 0; border-left: 2px solid #a19fa5; border-bottom: 2px solid #d5d3d8; }
.doctabs { display: flex; align-items: flex-end; height: 14px; background: #efedf1; border-bottom: 2px solid #918f95; }
.doctabs button { height: 12px; padding: 0 3px; gap: 2px; border: 1px solid #b5b3b9; border-width: 1px 1px 0 0; }
.doctabs button svg { width: 9px; height: 9px; }
.doctabs .on { background: #fff; font-weight: 700; }
.doctabs .x { margin-left: 3px; }
.slant { width: 10px; height: 12px; }
.canvas { flex: 1; min-height: 0; background: #fff; }
.drawing { display: block; width: 100%; height: 100%; }
.hscroll.wide .thumb { margin-left: 50%; width: 9%; background: #cdcbce; }

.status { height: 13px; padding-left: 1px; }
.side, .status { background-color: #f6f4f8; }
.status button { height: 12px; padding: 0 2px; gap: 1px; border: 1px solid #c6c4ca; color: #77757c; }
.status svg { width: 9px; height: 9px; }

.ring path { fill: none; stroke: #8f8c68; }
.inner path { fill: none; stroke: #8482ab; }
.inner .arm { stroke: #5d5a98; }
.inner .bold { stroke: #433f86; stroke-width: 2; }
.inner .pale { stroke: #a9a79f; }
.dim path { fill: none; stroke: #55534b; }
.num text { font: 11px "Liberation Sans", Arial, sans-serif; text-anchor: middle; fill: #222; }
.lbl text { font: 8px "Liberation Sans", Arial, sans-serif; fill: #333; }
```
